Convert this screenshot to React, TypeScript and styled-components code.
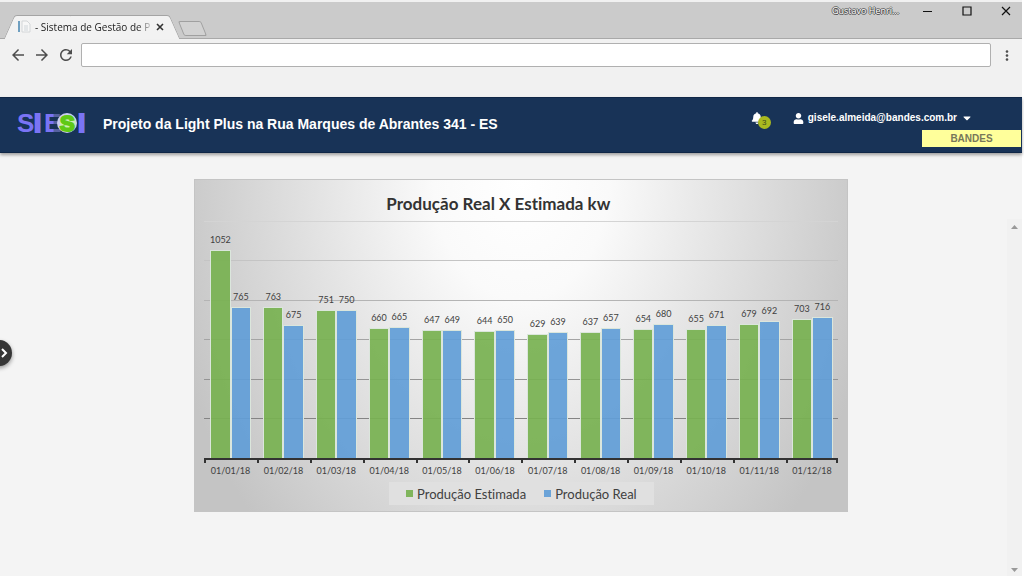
import React from "react";
import styled, { createGlobalStyle } from "styled-components";
import { FaBell, FaUser, FaCaretDown } from "react-icons/fa";
import { MdArrowBack, MdArrowForward, MdRefresh, MdMoreVert } from "react-icons/md";

const GREEN = "rgba(120, 178, 82, 0.93)";
const BLUE = "rgba(98, 158, 215, 0.93)";
const NAVY = "#183357";
const AXIS_MAX = 1200;

const DATA = [
  { date: "01/01/18", estimated: 1052, real: 765 },
  { date: "01/02/18", estimated: 763, real: 675 },
  { date: "01/03/18", estimated: 751, real: 750 },
  { date: "01/04/18", estimated: 660, real: 665 },
  { date: "01/05/18", estimated: 647, real: 649 },
  { date: "01/06/18", estimated: 644, real: 650 },
  { date: "01/07/18", estimated: 629, real: 639 },
  { date: "01/08/18", estimated: 637, real: 657 },
  { date: "01/09/18", estimated: 654, real: 680 },
  { date: "01/10/18", estimated: 655, real: 671 },
  { date: "01/11/18", estimated: 679, real: 692 },
  { date: "01/12/18", estimated: 703, real: 716 },
];

const GlobalStyle = createGlobalStyle`
  *, *::before, *::after { box-sizing: border-box; }
  body { margin: 0; background: #fff; font-family: "Liberation Sans", Arial, sans-serif; }
  button { border: 0; padding: 0; background: none; font: inherit; color: inherit; display: flex; align-items: center; justify-content: center; }
`;

const Page = styled.div`
  min-height: 100vh;
  display: flex;
  flex-direction: column;
  margin-right: 2px;
  background: #f4f4f4;
`;

const TabStrip = styled.div`
  height: 39px;
  border-top: 2px solid #f1f1f1;
  background: #cbcbcb;
  box-shadow: inset 0 -1px #a9a9a9;
  display: flex;
  align-items: flex-end;
  padding-left: 9px;
`;

const Tab = styled.div`
  position: relative;
  z-index: 0;
  width: 166px;
  height: 24px;
  display: flex;
  align-items: center;
  padding: 0 10px 0 8px;
  gap: 4px;
  &::before, &::after {
    content: "";
    position: absolute;
    z-index: -1;
    top: 0;
    bottom: 0;
    background: #f2f2f2;
    border-top: 1px solid #a4a4a4;
  }
  &::before {
    left: 0;
    right: 50%;
    border-left: 1px solid #a4a4a4;
    border-top-left-radius: 3px;
    transform: skewX(-24deg);
  }
  &::after {
    left: 40%;
    right: 0;
    border-right: 1px solid #a4a4a4;
    border-top-right-radius: 3px;
    transform: skewX(24deg);
  }
`;

const TabTitle = styled.span`
  flex: 1;
  overflow: hidden;
  white-space: nowrap;
  font: 10px/16px "Open Sans", sans-serif;
  color: #222;
  mask-image: linear-gradient(90deg, #000 88%, rgba(0, 0, 0, 0.2) 100%);
`;

const TabClose = styled.button`
  width: 10px;
  height: 16px;
`;

const NewTab = styled.button`
  width: 23px;
  height: 15px;
  margin: 0 0 3px 6px;
  border: 1px solid #a0a0a0;
  border-radius: 2px;
  background: #d2d2d2;
  transform: skewX(22deg);
`;

const WindowTools = styled.div`
  align-self: flex-start;
  margin-left: auto;
  padding-right: 10px;
  height: 18px;
  display: flex;
  align-items: center;
  gap: 27px;
`;

const Profile = styled.button`
  font: 9px/14px "Open Sans", sans-serif;
  color: #fff;
  text-shadow: 1px 0 #444, -1px 0 #666, 0 1px #444, 0 -1px #666;
  margin-right: -4px;
`;

const WindowButton = styled.button`
  width: 12px;
  height: 14px;
  color: #111;
`;

const Toolbar = styled.div`
  height: 58px;
  background: #f1f1f1;
  display: flex;
  align-items: flex-start;
  padding: 4px 7px 0 6px;
`;

const NavButton = styled.button<{ $wide?: boolean }>`
  flex: none;
  width: ${(p) => (p.$wide ? 24 : 16)}px;
  height: 24px;
  color: #4d4d4d;
`;

const Address = styled.input`
  flex: 1;
  min-width: 0;
  height: 24px;
  margin: 0 8px 0 3px;
  border: 1px solid #b0b0b0;
  border-radius: 2px;
  background: #fff;
`;

const Header = styled.header`
  height: 56px;
  position: relative;
  background: ${NAVY};
  border-top: 1px solid #102747;
  border-bottom: 1px solid #102747;
  box-shadow: 0 2px 3px rgba(0, 0, 0, 0.35);
  display: flex;
  align-items: stretch;
  padding-left: 17px;
`;

const Logo = styled.svg`
  flex: none;
  width: 70px;
  height: 30px;
  margin: 10px 16px 0 0;
  overflow: visible;
`;

const Title = styled.h1`
  margin: 0;
  font-size: 14px;
  line-height: 52px;
  font-weight: 700;
  color: #fff;
`;

const Account = styled.div`
  margin-left: auto;
  display: flex;
  flex-direction: column;
  align-items: flex-end;
  justify-content: space-between;
  padding: 11px 1px 5px 0;
`;

const AccountRow = styled.div`
  display: flex;
  align-items: flex-start;
  gap: 22px;
  padding-right: 48px;
`;

const Bell = styled.button`
  position: relative;
  width: 20px;
  height: 18px;
  color: #fff;
  justify-content: flex-start;
`;

const Count = styled.span`
  position: absolute;
  left: 7px;
  top: 7px;
  width: 13px;
  height: 13px;
  border-radius: 50%;
  background: #a9b91f;
  color: #3d4a1c;
  font-size: 8px;
  line-height: 13px;
  text-align: center;
`;

const UserMenu = styled.button`
  height: 18px;
  gap: 4px;
  color: #fff;
  font-size: 10px;
  line-height: 18px;
  font-weight: 700;
`;

const Company = styled.div`
  width: 99px;
  height: 17px;
  background: #ffff9b;
  color: #77775a;
  font-size: 10px;
  line-height: 18px;
  font-weight: 700;
  text-align: center;
`;

const Body = styled.div`
  flex: 1;
  display: flex;
  position: relative;
`;

const Main = styled.main`
  flex: 1;
  padding: 26px 0 24px 19%;
`;

const Chart = styled.figure`
  margin: 0;
  width: 80.5%;
  border: 1px solid #c4c4c4;
  padding: 0 9px 6px;
  background: radial-gradient(ellipse 56% 150% at 50% 0, #fff 0%, #fafafa 24%, #dfdfdf 62%, #c4c4c4 100%);
  font-family: Lato, "Open Sans", sans-serif;
  font-variant-ligatures: none;
  color: #404040;
`;

const ChartTitle = styled.figcaption`
  padding: 13px 46px 6px 0;
  font-size: 17px;
  line-height: 22px;
  font-weight: 700;
  text-align: center;
  color: #333;
`;

const Plot = styled.div`
  height: 239px;
  display: grid;
  grid-template-columns: repeat(12, minmax(0, 1fr));
  border-bottom: 2px solid #333;
  background:
    linear-gradient(#d4d4d4, #d4d4d4) 0 0 / 100% 1px no-repeat,
    linear-gradient(#c4c4c4, #c4c4c4) 0 39px / 100% 1px no-repeat,
    linear-gradient(#b4b4b4, #b4b4b4) 0 79px / 100% 1px no-repeat,
    linear-gradient(#a4a4a4, #a4a4a4) 0 118px / 100% 1px no-repeat,
    linear-gradient(#949494, #949494) 0 158px / 100% 1px no-repeat,
    linear-gradient(#848484, #848484) 0 197px / 100% 1px no-repeat;
`;

const Group = styled.div`
  display: flex;
  align-items: flex-end;
  padding: 0 6px;
  height: 100%;
`;

const Bar = styled.div<{ $color: string }>`
  flex: 1 1 0;
  min-width: 0;
  display: flex;
  justify-content: center;
  background: ${(p) => p.$color} padding-box;
  border: 1px solid #dbe6dc;
  border-bottom: 0;
`;

const Value = styled.span`
  height: 14px;
  margin-top: -18px;
  font-size: 9px;
  line-height: 14px;
`;

const Dates = styled.div`
  display: grid;
  grid-template-columns: repeat(12, minmax(0, 1fr));
`;

const DateLabel = styled.span`
  font-size: 9px;
  line-height: 14px;
  padding: 4px 0 0;
  text-align: center;
  white-space: nowrap;
  background: linear-gradient(#333, #333) 0 0 / 2px 3px no-repeat;
  &:last-child {
    background:
      linear-gradient(#333, #333) 0 0 / 2px 3px no-repeat,
      linear-gradient(#333, #333) 100% 0 / 2px 3px no-repeat;
  }
`;

const Legend = styled.ul`
  list-style: none;
  width: 265px;
  height: 23px;
  margin: 4px auto 0;
  padding: 0;
  background: #e0e0e0;
  display: flex;
  align-items: center;
  justify-content: center;
  gap: 18px;
`;

const LegendItem = styled.li<{ $color: string }>`
  display: flex;
  align-items: center;
  gap: 4px;
  font-size: 13px;
  line-height: 16px;
  &::before {
    content: "";
    width: 7px;
    height: 7px;
    background: ${(p) => p.$color};
  }
`;

const Drawer = styled.button`
  position: absolute;
  left: -14px;
  top: 187px;
  width: 26px;
  height: 26px;
  border-radius: 50%;
  background: #363636;
  box-shadow: 0 2px 4px rgba(0, 0, 0, 0.4);
  justify-content: flex-end;
  padding-right: 4px;
`;

const ScrollTrack = styled.div`
  width: 15px;
  margin-top: 66px;
  padding: 6px 0 4px;
  background: #f1f1f1;
  display: flex;
  flex-direction: column;
  align-items: center;
  justify-content: space-between;
`;

const Series = ({ value, color }: { value: number; color: string }) => (
  <Bar $color={color} style={{ height: `${(value / AXIS_MAX) * 100}%` }}>
    <Value>{value}</Value>
  </Bar>
);

export default function App() {
  return (
    <>
      <GlobalStyle />
      <Page>
        <TabStrip>
          <Tab>
            <svg width="14" height="14" viewBox="0 0 14 14" aria-hidden="true">
              <path d="M1 1h2v11H1z" fill="#6f9fc0" />
              <path d="M5 1h5l3 3v8H5z" fill="#f7f7f7" stroke="#d3d6d8" />
              <path d="M7 6h4M7 8h4M7 10h4" stroke="#cfd5d9" />
            </svg>
            <TabTitle>- Sistema de Gestão de P</TabTitle>
            <TabClose aria-label="Fechar aba">
              <svg width="8" height="8" viewBox="0 0 8 8"><path d="M1 1l6 6M7 1L1 7" stroke="#333" strokeWidth="1.6" /></svg>
            </TabClose>
          </Tab>
          <NewTab aria-label="Nova aba" />
          <WindowTools>
            <Profile>Gustavo Henri...</Profile>
            <WindowButton aria-label="Minimizar">
              <svg width="10" height="10" viewBox="0 0 10 10"><path d="M0 5.5h9" stroke="currentColor" /></svg>
            </WindowButton>
            <WindowButton aria-label="Maximizar">
              <svg width="10" height="10" viewBox="0 0 10 10"><path d="M1 1h8v8H1z" fill="none" stroke="currentColor" strokeWidth="1.2" /></svg>
            </WindowButton>
            <WindowButton aria-label="Fechar">
              <svg width="10" height="10" viewBox="0 0 10 10"><path d="M1 1l8 8M9 1L1 9" stroke="currentColor" strokeWidth="1.2" /></svg>
            </WindowButton>
          </WindowTools>
        </TabStrip>
        <Toolbar>
          <NavButton $wide aria-label="Voltar"><MdArrowBack size={18} /></NavButton>
          <NavButton $wide aria-label="Avançar"><MdArrowForward size={18} /></NavButton>
          <NavButton $wide aria-label="Recarregar"><MdRefresh size={18} /></NavButton>
          <Address aria-label="Endereço" />
          <NavButton aria-label="Menu"><MdMoreVert size={17} /></NavButton>
        </Toolbar>
        <Header>
          <Logo viewBox="0 0 70 30" role="img" aria-label="SIESI">
            <defs>
              <linearGradient id="stem" x1="0" x2="1">
                <stop offset="0.5" stopColor="#7a74f4" />
                <stop offset="0.6" stopColor="#56629f" />
              </linearGradient>
            </defs>
            <g fontFamily="Liberation Sans" fontWeight="700" fontSize="26" fill="#7a74f4">
              <text x="0" y="24">S</text>
              <text x="17" y="24" stroke="#7a74f4" strokeWidth="2">I</text>
              <text x="27" y="24" fill="url(#stem)">E</text>
              <text x="61" y="24" stroke="#7a74f4" strokeWidth="2">I</text>
            </g>
            <circle cx="50" cy="15" r="10" fill="#c9cdf0" />
            <circle cx="51" cy="15" r="8" fill="#cdeeb4" />
            <text x="43" y="23" fontFamily="Liberation Sans" fontWeight="700" fontSize="22" fill="#5fc916" stroke="#5fc916" strokeWidth="2">S</text>
          </Logo>
          <Title>Projeto da Light Plus na Rua Marques de Abrantes 341 - ES</Title>
          <Account>
            <AccountRow>
              <Bell aria-label="Notificações"><FaBell size={12} /><Count>3</Count></Bell>
              <UserMenu><FaUser size={11} />gisele.almeida@bandes.com.br<FaCaretDown size={12} /></UserMenu>
            </AccountRow>
            <Company>BANDES</Company>
          </Account>
        </Header>
        <Body>
          <Drawer aria-label="Abrir menu">
            <svg width="7" height="10" viewBox="0 0 7 10"><path d="M1 1l4 4-4 4" fill="none" stroke="#fff" strokeWidth="2" /></svg>
          </Drawer>
          <Main>
            <Chart>
              <ChartTitle>Produção Real X Estimada kw</ChartTitle>
              <Plot>
                {DATA.map((d) => (
                  <Group key={d.date}>
                    <Series value={d.estimated} color={GREEN} />
                    <Series value={d.real} color={BLUE} />
                  </Group>
                ))}
              </Plot>
              <Dates>{DATA.map((d) => <DateLabel key={d.date}>{d.date}</DateLabel>)}</Dates>
              <Legend>
                <LegendItem $color={GREEN}>Produção Estimada</LegendItem>
                <LegendItem $color={BLUE}>Produção Real</LegendItem>
              </Legend>
            </Chart>
          </Main>
          <ScrollTrack aria-hidden="true">
            <svg width="7" height="4" viewBox="0 0 7 4"><path d="M0 4l3.500-4L7 4z" fill="#999" /></svg>
            <svg width="7" height="4" viewBox="0 0 7 4"><path d="M0 0l3.500 4L7 0z" fill="#999" /></svg>
          </ScrollTrack>
        </Body>
      </Page>
    </>
  );
}
